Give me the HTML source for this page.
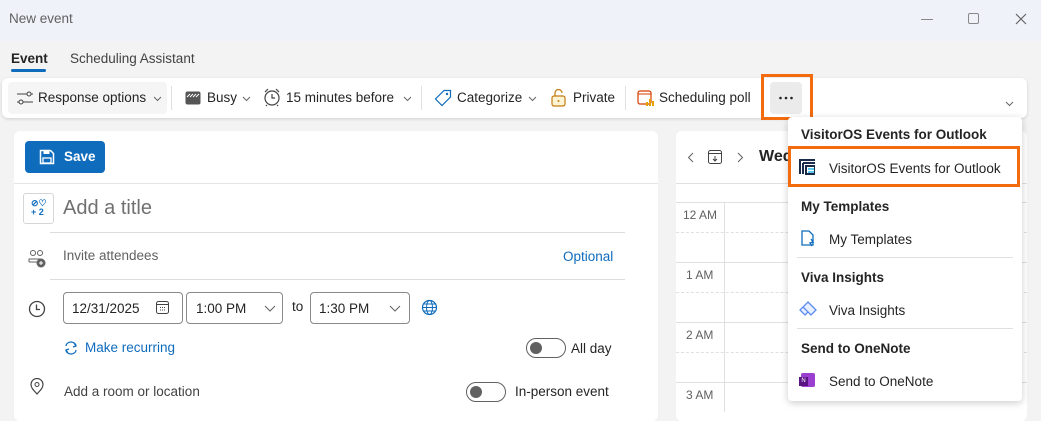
<!DOCTYPE html>
<html><head><meta charset="utf-8"><style>
*{box-sizing:border-box;margin:0;padding:0}
body{width:1041px;height:406px;overflow:hidden;background:#f3f3f3;font-family:"Liberation Sans",sans-serif;color:#242424;position:relative;font-size:13.5px}
.abs{position:absolute}
.t{position:absolute;white-space:nowrap}
</style></head><body>
<div class="abs" style="left:0;top:0;width:1041px;height:41px;background:#eff2f9"></div>
<div class="t" style="left:9px;top:11px;font-size:13.5px;color:#616161">New event</div>
<div class="abs" style="left:921px;top:19px;width:12px;height:1px;background:#888"></div>
<div class="abs" style="left:968px;top:13px;width:11px;height:11px;border:1px solid #888;border-radius:2px"></div>
<svg class="abs" style="left:1015px;top:13px" width="12" height="12"><path d="M1 1L11 11M11 1L1 11" stroke="#666" stroke-width="1.2"/></svg>
<div class="t" style="left:11px;top:51px;font-weight:700">Event</div>
<div class="abs" style="left:11px;top:69px;width:35px;height:3px;background:#0f6cbd;border-radius:2px"></div>
<div class="t" style="left:70px;top:51px;color:#424242">Scheduling Assistant</div>
<div class="abs" style="left:2px;top:78px;width:1025px;height:40px;background:#fff;border-radius:6px;box-shadow:0 1px 3px rgba(0,0,0,.15)"></div>
<div class="abs" style="left:8px;top:82px;width:159px;height:32px;background:#f5f5f5;border-radius:4px"></div>
<svg class="abs" style="left:16px;top:91px" width="18" height="14"><path d="M1 3h10M15 3h2M1 11h2M7 11h10" stroke="#424242" stroke-width="1.1" fill="none"/><circle cx="13" cy="3" r="2" stroke="#424242" fill="none"/><circle cx="5" cy="11" r="2" stroke="#424242" fill="none"/></svg>
<div class="t" style="left:38px;top:90px">Response options</div>
<svg class="abs" style="left:153px;top:96px" width="9" height="6"><path d="M1 1l3.5 3.5L8 1" stroke="#666" fill="none"/></svg>
<div class="abs" style="left:171px;top:86px;width:1px;height:24px;background:#e0e0e0"></div>
<svg class="abs" style="left:185px;top:91px" width="16" height="14"><rect x="0.5" y="0.5" width="15" height="13" rx="2" fill="#555"/><path d="M2 6l3-3M5 6l3-3M8 6l3-3M11 6l3-3" stroke="#fff" stroke-width="1"/></svg>
<div class="t" style="left:207px;top:90px">Busy</div>
<svg class="abs" style="left:242px;top:96px" width="9" height="6"><path d="M1 1l3.5 3.5L8 1" stroke="#666" fill="none"/></svg>
<svg class="abs" style="left:263px;top:88px" width="18" height="19"><circle cx="9" cy="10" r="7" stroke="#424242" fill="none" stroke-width="1.2"/><path d="M9 6v4h3M2 4l3-3M16 4l-3-3M4 17l-1 1M14 17l1 1" stroke="#424242" fill="none" stroke-width="1.2"/></svg>
<div class="t" style="left:286px;top:90px">15 minutes before</div>
<svg class="abs" style="left:403px;top:96px" width="9" height="6"><path d="M1 1l3.5 3.5L8 1" stroke="#666" fill="none"/></svg>
<div class="abs" style="left:421px;top:86px;width:1px;height:24px;background:#e0e0e0"></div>
<svg class="abs" style="left:434px;top:89px" width="18" height="18"><path d="M10 1.5h6.5v6.5l-8.5 8.5-6.5-6.5z" stroke="#0f6cbd" fill="none" stroke-width="1.2"/><circle cx="13" cy="5" r="1.2" fill="#0f6cbd"/></svg>
<div class="t" style="left:457px;top:90px">Categorize</div>
<svg class="abs" style="left:528px;top:96px" width="9" height="6"><path d="M1 1l3.5 3.5L8 1" stroke="#666" fill="none"/></svg>
<svg class="abs" style="left:551px;top:88px" width="16" height="19"><rect x="1" y="8" width="13" height="10" rx="2" stroke="#c27c0e" fill="#fff3d6" stroke-width="1.2"/><path d="M4 8V5a3.5 3.5 0 0 1 7 0" stroke="#c27c0e" fill="none" stroke-width="1.2"/><circle cx="7.5" cy="13" r="1" fill="#c27c0e"/></svg>
<div class="t" style="left:573px;top:90px">Private</div>
<div class="abs" style="left:625px;top:86px;width:1px;height:24px;background:#e0e0e0"></div>
<svg class="abs" style="left:637px;top:89px" width="18" height="18"><rect x="1" y="2" width="13" height="13" rx="2" stroke="#d83b01" fill="#fff" stroke-width="1.2"/><path d="M1 5h13" stroke="#d83b01"/><path d="M10 17v-4M13 17v-7M16 17v-5" stroke="#e8a000" stroke-width="2"/></svg>
<div class="t" style="left:659px;top:90px">Scheduling poll</div>
<div class="abs" style="left:770px;top:82px;width:32px;height:32px;background:#ebebeb;border-radius:4px"></div>
<svg class="abs" style="left:778px;top:96px" width="16" height="4"><circle cx="2.5" cy="2" r="1.3" fill="#242424"/><circle cx="8" cy="2" r="1.3" fill="#242424"/><circle cx="13.5" cy="2" r="1.3" fill="#242424"/></svg>
<div class="abs" style="left:761px;top:74px;width:52px;height:46px;border:3px solid #f26b0f"></div>
<svg class="abs" style="left:1005px;top:101px" width="9" height="6"><path d="M1 1l3.5 3.5L8 1" stroke="#666" fill="none"/></svg>
<div class="abs" style="left:14px;top:131px;width:644px;height:290px;background:#fff;border-radius:6px"></div>
<div class="abs" style="left:14px;top:183px;width:644px;height:1px;background:#e6e6e6"></div>
<div class="abs" style="left:25px;top:141px;width:80px;height:32px;background:#0f6cbd;border-radius:4px"></div>
<svg class="abs" style="left:39px;top:149px" width="16" height="16"><path d="M1.5 1.5h10l3 3v10h-13z" stroke="#fff" fill="none" stroke-width="1.5"/><rect x="4" y="9" width="8" height="5" stroke="#fff" fill="none" stroke-width="1.3"/><rect x="4.5" y="2" width="6" height="3" fill="#fff"/></svg>
<div class="t" style="left:64px;top:149px;color:#fff;font-weight:700;font-size:13.5px">Save</div>
<div class="abs" style="left:23px;top:193px;width:31px;height:31px;border:1px solid #d6d6d6;border-radius:3px"></div>
<div class="t" style="left:31px;top:199px;font-size:9px;line-height:9px;color:#0f6cbd;font-weight:700">⊘♡<br>+ 2</div>
<div class="t" style="left:63px;top:197px;font-size:20px;color:#707070">Add a title</div>
<div class="abs" style="left:50px;top:232px;width:575px;height:1px;background:#dcdcdc"></div>
<svg class="abs" style="left:28px;top:250px" width="20" height="18"><circle cx="5" cy="3" r="2.5" stroke="#616161" fill="none"/><circle cx="12" cy="3" r="2.5" stroke="#616161" fill="none"/><path d="M1 12v-3h12M1 12h8" stroke="#616161" fill="none"/><circle cx="13" cy="13" r="4.5" fill="#616161"/><path d="M13 11v4M11 13h4" stroke="#fff"/></svg>
<div class="t" style="left:63px;top:248px;color:#616161">Invite attendees</div>
<div class="t" style="left:563px;top:249px;color:#0f6cbd">Optional</div>
<div class="abs" style="left:50px;top:279px;width:575px;height:1px;background:#dcdcdc"></div>
<svg class="abs" style="left:28px;top:300px" width="18" height="18"><circle cx="9" cy="9" r="7.5" stroke="#424242" fill="none" stroke-width="1.3"/><path d="M8.5 4.5v5h3.5" stroke="#424242" fill="none" stroke-width="1.3"/></svg>
<div class="abs" style="left:63px;top:292px;width:120px;height:32px;border:1px solid #8a8a8a;border-radius:4px"></div>
<div class="t" style="left:72px;top:301px">12/31/2025</div>
<svg class="abs" style="left:156px;top:300px" width="13" height="14"><rect x="0.5" y="1.5" width="12" height="12" rx="2" stroke="#424242" fill="none"/><path d="M1 4.5h11" stroke="#424242"/><path d="M4 7.5h1M6 7.5h1M8 7.5h1M4 10h1M6 10h1M8 10h1" stroke="#424242"/></svg>
<div class="abs" style="left:186px;top:292px;width:97px;height:32px;border:1px solid #8a8a8a;border-radius:4px"></div>
<div class="t" style="left:196px;top:301px">1:00 PM</div>
<svg class="abs" style="left:264px;top:305px" width="12" height="8"><path d="M1 1l5 5 5-5" stroke="#616161" fill="none"/></svg>
<div class="t" style="left:292px;top:299px">to</div>
<div class="abs" style="left:310px;top:292px;width:100px;height:32px;border:1px solid #8a8a8a;border-radius:4px"></div>
<div class="t" style="left:319px;top:301px">1:30 PM</div>
<svg class="abs" style="left:389px;top:305px" width="12" height="8"><path d="M1 1l5 5 5-5" stroke="#616161" fill="none"/></svg>
<svg class="abs" style="left:421px;top:299px" width="17" height="17"><circle cx="8.5" cy="8.5" r="7" stroke="#0f6cbd" fill="none" stroke-width="1.2"/><ellipse cx="8.5" cy="8.5" rx="3" ry="7" stroke="#0f6cbd" fill="none"/><path d="M1.5 8.5h14M3 5h11M3 12h11" stroke="#0f6cbd"/></svg>
<svg class="abs" style="left:63px;top:340px" width="16" height="16"><path d="M3 6a5 4 0 0 1 10 0M13 10a5 4 0 0 1-10 0M11 3l2 3-3 1M5 13l-2-3 3-1" stroke="#0f6cbd" fill="none" stroke-width="1.2"/></svg>
<div class="t" style="left:85px;top:340px;color:#0f6cbd">Make recurring</div>
<div class="abs" style="left:526px;top:338px;width:40px;height:20px;border:1px solid #616161;border-radius:10px"></div>
<div class="abs" style="left:530px;top:342px;width:12px;height:12px;background:#616161;border-radius:50%"></div>
<div class="t" style="left:571px;top:341px">All day</div>
<svg class="abs" style="left:30px;top:378px" width="14" height="18"><path d="M7 16c-3-3.5-6-6-6-9.5a6 6 0 0 1 12 0c0 3.5-3 6-6 9.5z" stroke="#424242" fill="none" stroke-width="1.2"/><circle cx="7" cy="6.5" r="2" stroke="#424242" fill="none"/></svg>
<div class="t" style="left:64px;top:384px;color:#424242">Add a room or location</div>
<div class="abs" style="left:466px;top:382px;width:40px;height:20px;border:1px solid #616161;border-radius:10px"></div>
<div class="abs" style="left:470px;top:386px;width:12px;height:12px;background:#616161;border-radius:50%"></div>
<div class="t" style="left:515px;top:384px">In-person event</div>
<div class="abs" style="left:676px;top:131px;width:351px;height:290px;background:#fff;border-radius:6px"></div>
<div class="abs" style="left:676px;top:183px;width:351px;height:1px;background:#e0e0e0"></div>
<div class="abs" style="left:676px;top:202px;width:351px;height:1px;background:#e0e0e0"></div>
<svg class="abs" style="left:687px;top:152px" width="7" height="11"><path d="M6 1L1.5 5.5 6 10" stroke="#616161" fill="none"/></svg>
<svg class="abs" style="left:708px;top:150px" width="15" height="15"><rect x="0.5" y="0.5" width="13" height="13" rx="2" stroke="#424242" fill="none"/><path d="M1 3.5h12M7 6v5M5 9l2 2 2-2" stroke="#424242" fill="none"/></svg>
<svg class="abs" style="left:737px;top:152px" width="7" height="11"><path d="M1 1l4.5 4.5L1 10" stroke="#616161" fill="none"/></svg>
<div class="t" style="left:759px;top:148px;font-size:16px;font-weight:700">Wed</div>
<div class="abs" style="left:724px;top:202px;width:1px;height:210px;background:#e0e0e0"></div>
<div class="abs" style="left:676px;top:262px;width:351px;height:1px;background:#e0e0e0"></div>
<div class="abs" style="left:676px;top:322px;width:351px;height:1px;background:#e0e0e0"></div>
<div class="abs" style="left:676px;top:382px;width:351px;height:1px;background:#e0e0e0"></div>
<div class="abs" style="left:676px;top:232px;width:351px;border-top:1px dashed #e0e0e0"></div>
<div class="abs" style="left:676px;top:292px;width:351px;border-top:1px dashed #e0e0e0"></div>
<div class="abs" style="left:676px;top:352px;width:351px;border-top:1px dashed #e0e0e0"></div>
<div class="t" style="left:683px;top:208px;font-size:12px;color:#616161">12 AM</div>
<div class="t" style="left:686px;top:268px;font-size:12px;color:#616161">1 AM</div>
<div class="t" style="left:686px;top:328px;font-size:12px;color:#616161">2 AM</div>
<div class="t" style="left:686px;top:388px;font-size:12px;color:#616161">3 AM</div>
<div class="abs" style="left:788px;top:117px;width:234px;height:284px;background:#fff;border-radius:4px;box-shadow:0 2px 8px rgba(0,0,0,.2)"></div>
<div class="t" style="left:801px;top:127px;font-weight:700">VisitorOS Events for Outlook</div>
<div class="abs" style="left:788px;top:146px;width:232px;height:41px;border:3px solid #f26b0f"></div>
<svg class="abs" style="left:799px;top:159px" width="16" height="16"><path d="M0 1h16M1 1v14M4 4h12M4 4v11M7 7h9v8H7z" stroke="#1a2a4a" stroke-width="2" fill="none"/><path d="M9 10h6M9 13h6" stroke="#27b6e8" stroke-width="1.5"/></svg>
<div class="t" style="left:829px;top:161px">VisitorOS Events for Outlook</div>
<div class="t" style="left:801px;top:199px;font-weight:700">My Templates</div>
<svg class="abs" style="left:801px;top:230px" width="14" height="17"><path d="M1 1h7l4 4v10H1z" stroke="#0f6cbd" fill="none" stroke-width="1.3"/><path d="M10 9l2 3-3 1 2 3" stroke="#0f6cbd" fill="none" stroke-width="1.3"/></svg>
<div class="t" style="left:829px;top:232px">My Templates</div>
<div class="abs" style="left:797px;top:257px;width:216px;height:1px;background:#e0e0e0"></div>
<div class="t" style="left:801px;top:270px;font-weight:700">Viva Insights</div>
<svg class="abs" style="left:799px;top:301px" width="18" height="17"><path d="M9 1l8 8-5 5-8-8zM4 6l-3 3 5 5 3-3" stroke="#5b8def" fill="#e8efff" stroke-width="1.3"/></svg>
<div class="t" style="left:829px;top:303px">Viva Insights</div>
<div class="abs" style="left:797px;top:328px;width:216px;height:1px;background:#e0e0e0"></div>
<div class="t" style="left:801px;top:341px;font-weight:700">Send to OneNote</div>
<div class="abs" style="left:801px;top:373px;width:14px;height:14px;background:#9b3fd0;border-radius:2px"></div>
<div class="abs" style="left:799px;top:377px;width:9px;height:9px;background:#5a1585;color:#fff;font-size:6px;line-height:9px;text-align:center">N</div>
<div class="t" style="left:829px;top:374px">Send to OneNote</div>
</body></html>
